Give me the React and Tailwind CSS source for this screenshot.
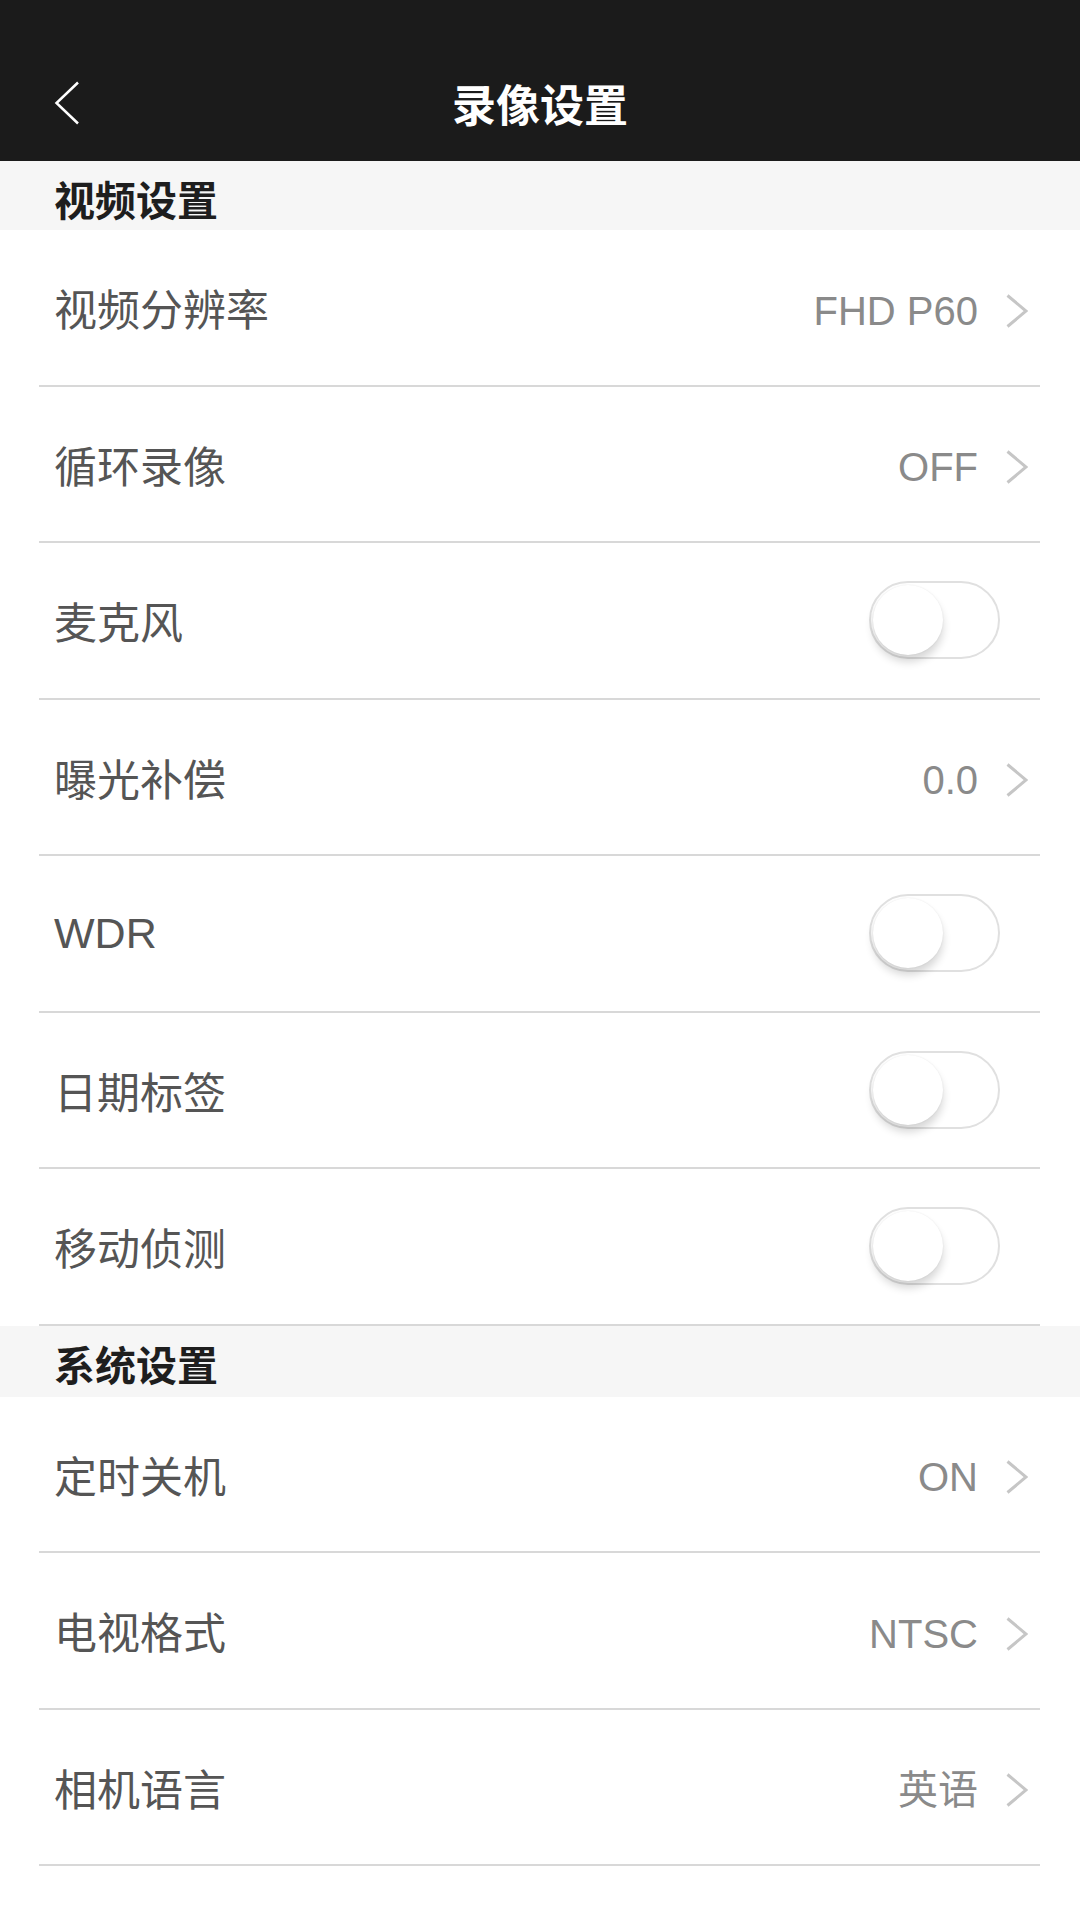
import React from 'react';

const videoRows = [
  { label: '视频分辨率', value: 'FHD P60' },
  { label: '循环录像', value: 'OFF' },
  { label: '麦克风', toggle: true },
  { label: '曝光补偿', value: '0.0' },
  { label: 'WDR', toggle: true },
  { label: '日期标签', toggle: true },
  { label: '移动侦测', toggle: true },
];

const systemRows = [
  { label: '定时关机', value: 'ON' },
  { label: '电视格式', value: 'NTSC' },
  { label: '相机语言', value: '英语' },
];

const cjk = "font-['Noto_Sans_CJK_SC',sans-serif]";
const valueFont = "font-['Liberation_Sans','Noto_Sans_CJK_SC',sans-serif]";

const Toggle = () => (
  <div className="relative w-[131px] h-[78px] rounded-full border-2 border-[#e0e0e0] bg-white">
    <div className="absolute left-[2px] top-[2px] w-[70px] h-[70px] rounded-full bg-white shadow-[0_7px_9px_rgba(0,0,0,0.16),0_0_2px_rgba(0,0,0,0.08)]"></div>
  </div>
);

const Row = ({ row }) => (
  <div className="h-[156.5px] flex flex-col">
    <div className={`flex-1 flex items-center pl-[54px] ${row.toggle ? 'pr-[80px]' : 'pr-[52px]'}`}>
      <span className={`flex-1 text-[43px] text-[#555555] ${row.label === 'WDR' ? valueFont : cjk}`}>{row.label}</span>
      {row.toggle ? (
        <Toggle />
      ) : (
        <div className="flex items-center mt-[7px]">
          <span className={`text-[40px] text-[#8a8a8a] ${valueFont}`}>{row.value}</span>
          <svg width="22" height="34" viewBox="0 0 22 34" className="ml-[28px]">
            <polyline points="1.5,1.5 20,17 1.5,32.5" fill="none" stroke="#c6c6c6" strokeWidth="3" />
          </svg>
        </div>
      )}
    </div>
    <div className="ml-[39px] mr-[40px] h-[2px] bg-[#d8d8d8]"></div>
  </div>
);

const Section = ({ title, h }) => (
  <div className={`bg-[#f6f6f6] flex items-center pl-[54px] pt-[6px] ${h}`}>
    <span className={`text-[41px] font-bold text-[#1e1e1e] ${cjk}`}>{title}</span>
  </div>
);

export default function App() {
  return (
    <div className="w-[1080px] h-[1920px] bg-white overflow-hidden">
      {/* Nav */}
      <div className="relative h-[161px] bg-[#1b1b1b] flex items-center justify-center pt-[44px]">
        <svg width="26" height="44" viewBox="0 0 26 44" className="absolute left-[54px] top-[81px]">
          <polyline points="24,1.5 2.5,22 24,42.5" fill="none" stroke="#ffffff" strokeWidth="2.5" />
        </svg>
        <span className={`text-[44px] font-bold text-white ${cjk}`}>录像设置</span>
      </div>

      <Section title="视频设置" h="h-[69px]" />
      {videoRows.map((r) => <Row key={r.label} row={r} />)}

      <Section title="系统设置" h="h-[71px]" />
      {systemRows.map((r) => <Row key={r.label} row={r} />)}
    </div>
  );
}
